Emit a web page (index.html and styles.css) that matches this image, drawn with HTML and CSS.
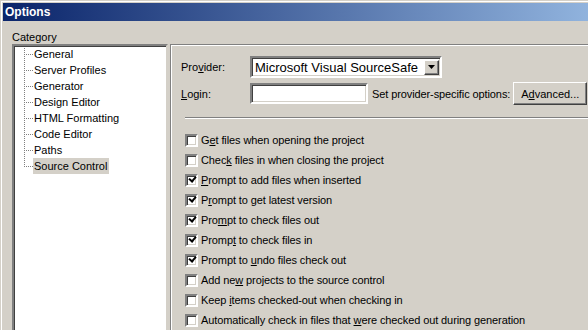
FILE: index.html
```html
<!DOCTYPE html>
<html>
    <head>
        <meta charset="utf-8">
        <link rel="stylesheet" href="styles.css">
    </head>
    <body>
        <div class="window">
            <div class="titlebar">Options</div>
            <div class="content">
                <div class="category-label">Category</div>
                <div class="columns">
                    <div class="tree">
                        <div class="tree-line"></div>
                        <div class="tree-item"><span>General</span></div>
                        <div class="tree-item"><span>Server Profiles</span></div>
                        <div class="tree-item"><span>Generator</span></div>
                        <div class="tree-item"><span>Design Editor</span></div>
                        <div class="tree-item"><span>HTML Formatting</span></div>
                        <div class="tree-item"><span>Code Editor</span></div>
                        <div class="tree-item"><span>Paths</span></div>
                        <div class="tree-item selected"><span>Source Control</span></div>
                    </div>
                    <div class="panel">
                        <div class="field-row">
                            <label class="field-label">Pro<u>v</u>ider:</label>
                            <div class="select">
                                <span class="select-text">Microsoft Visual SourceSafe</span>
                                <span class="select-btn">
                                    <svg width="7" height="4" viewBox="0 0 7 4"><path d="M0 0h7L3.5 4z" fill="#000"/></svg>
                                </span>
                            </div>
                        </div>
                        <div class="field-row login-row">
                            <label class="field-label"><u>L</u>ogin:</label>
                            <div class="input"></div>
                            <span class="hint">Set provider-specific options:</span>
                            <button class="button">A<u>d</u>vanced...</button>
                        </div>
                        <div class="separator"></div>
                        <div class="checks">
                            <div class="check"><span class="box"></span><span>G<u>e</u>t files when opening the project</span></div>
                            <div class="check"><span class="box"></span><span>Chec<u>k</u> files in when closing the project</span></div>
                            <div class="check"><span class="box on"></span><span><u>P</u>rompt to add files when inserted</span></div>
                            <div class="check"><span class="box on"></span><span>P<u>r</u>ompt to get latest version</span></div>
                            <div class="check"><span class="box on"></span><span>Pro<u>m</u>pt to check files out</span></div>
                            <div class="check"><span class="box on"></span><span>Promp<u>t</u> to check files in</span></div>
                            <div class="check"><span class="box on"></span><span>Prompt to <u>u</u>ndo files check out</span></div>
                            <div class="check"><span class="box"></span><span>Add ne<u>w</u> projects to the source control</span></div>
                            <div class="check"><span class="box"></span><span>Keep <u>i</u>tems checked-out when checking in</span></div>
                            <div class="check"><span class="box"></span><span>Automatically check in files that <u>w</u>ere checked out during generation</span></div>
                        </div>
                    </div>
                </div>
            </div>
        </div>
    </body>
</html>
```

FILE: styles.css
```css
html, body{
    margin: 0;
    padding: 0;
    overflow: hidden;
}
body{
    width: 588px;
    height: 330px;
    background: #d4d0c8;
    font-family: "Liberation Sans", Arial, sans-serif;
    font-size: 11px;
    color: #000;
}
.window{
    height: 330px;
    border-top: 1px solid #d4d0c8;
    border-left: 1px solid #d4d0c8;
    box-sizing: border-box;
    overflow: hidden;
}
.titlebar{
    border-top: 1px solid #fff;
    border-left: 1px solid #fff;
    padding: 1px 0 0 1px;
    height: 18px;
    background-clip: content-box;
    background-origin: content-box;
    background-image: linear-gradient(to right, #0a246a, #a6caf0 680px);
    color: #fff;
    font-weight: bold;
    font-size: 12px;
    line-height: 18px;
    text-indent: 2px;
}
.content{
    border-left: 1px solid #fff;
    padding-left: 10px;
    height: 309px;
    overflow: hidden;
}
.category-label{
    padding-top: 9px;
    height: 14px;
    line-height: 14px;
}
.columns{
    display: flex;
}
.tree{
    position: relative;
    width: 152px;
    height: 284px;
    background: #fff;
    border-top: 2px solid #808080;
    border-left: 2px solid #808080;
    border-right: 2px solid #d4d0c8;
    box-shadow: inset 1px 1px 0 #404040;
    margin-right: 2px;
}
.tree-line{
    position: absolute;
    left: 10px;
    top: 2px;
    height: 119px;
    border-left: 1px dotted #808080;
}
.tree-item{
    height: 16px;
    line-height: 16px;
    padding-left: 10px;
    display: flex;
    align-items: center;
}
.tree-item::before{
    content: "";
    width: 9px;
    border-top: 1px dotted #808080;
}
.tree-item span{
    padding: 0 2px 0 1px;
    height: 16px;
}
.tree-item.selected span{
    background: #d4d0c8;
}
.panel{
    flex: 1;
    margin-right: -20px;
    border-top: 1px solid #808080;
    border-left: 1px solid #808080;
    box-shadow: inset 1px 1px 0 #fff;
    padding: 11px 0 0 10px;
    height: 280px;
    overflow: hidden;
}
.field-row{
    display: flex;
    align-items: center;
    height: 22px;
}
.login-row{
    margin-top: 4px;
    height: 23px;
}
.field-label{
    width: 69px;
}
.select{
    display: flex;
    align-items: center;
    width: 188px;
    height: 18px;
    background: #fff;
    border: 2px solid;
    border-color: #808080 #fff #fff #808080;
    box-shadow: inset 1px 1px 0 #404040, inset -1px -1px 0 #d4d0c8;
}
.select-text{
    flex: 1;
    font-size: 13px;
    padding-left: 3px;
    white-space: nowrap;
    overflow: hidden;
}
.select-btn{
    width: 15px;
    height: 15px;
    margin-right: 1px;
    background: #d4d0c8;
    border: 1px solid;
    border-color: #fff #404040 #404040 #fff;
    box-shadow: inset -1px -1px 0 #808080;
    box-sizing: border-box;
    display: flex;
    align-items: center;
    justify-content: center;
}
.input{
    width: 114px;
    height: 17px;
    background: #fff;
    border: 2px solid;
    border-color: #808080 #fff #fff #808080;
    box-shadow: inset 1px 1px 0 #404040, inset -1px -1px 0 #d4d0c8;
}
.hint{
    margin-left: 4px;
    white-space: nowrap;
    letter-spacing: -0.1px;
}
.button{
    margin-left: 3px;
    width: 74px;
    height: 23px;
    background: #d4d0c8;
    border: 1px solid;
    border-color: #fff #404040 #404040 #fff;
    box-shadow: inset -1px -1px 0 #808080;
    font-family: inherit;
    font-size: 11px;
    padding: 0;
    color: #000;
}
.separator{
    margin: 12px 0 0 4px;
    height: 0;
    border-top: 1px solid #808080;
    border-bottom: 1px solid #fff;
}
.checks{
    margin-top: 11px;
    padding-left: 4px;
}
.check{
    display: flex;
    align-items: center;
    height: 20px;
    white-space: nowrap;
    letter-spacing: -0.1px;
}
.box{
    flex: none;
    width: 9px;
    height: 9px;
    background: #fff;
    border: 2px solid;
    border-color: #808080 #fff #fff #808080;
    box-shadow: inset 1px 1px 0 #404040, inset -1px -1px 0 #d4d0c8;
    margin-right: 3px;
    position: relative;
}
.box.on::after{
    content: "";
    position: absolute;
    left: 2px;
    top: 0;
    width: 5px;
    height: 3px;
    border-left: 2px solid #000;
    border-bottom: 2px solid #000;
    transform: rotate(-50deg);
}
```
